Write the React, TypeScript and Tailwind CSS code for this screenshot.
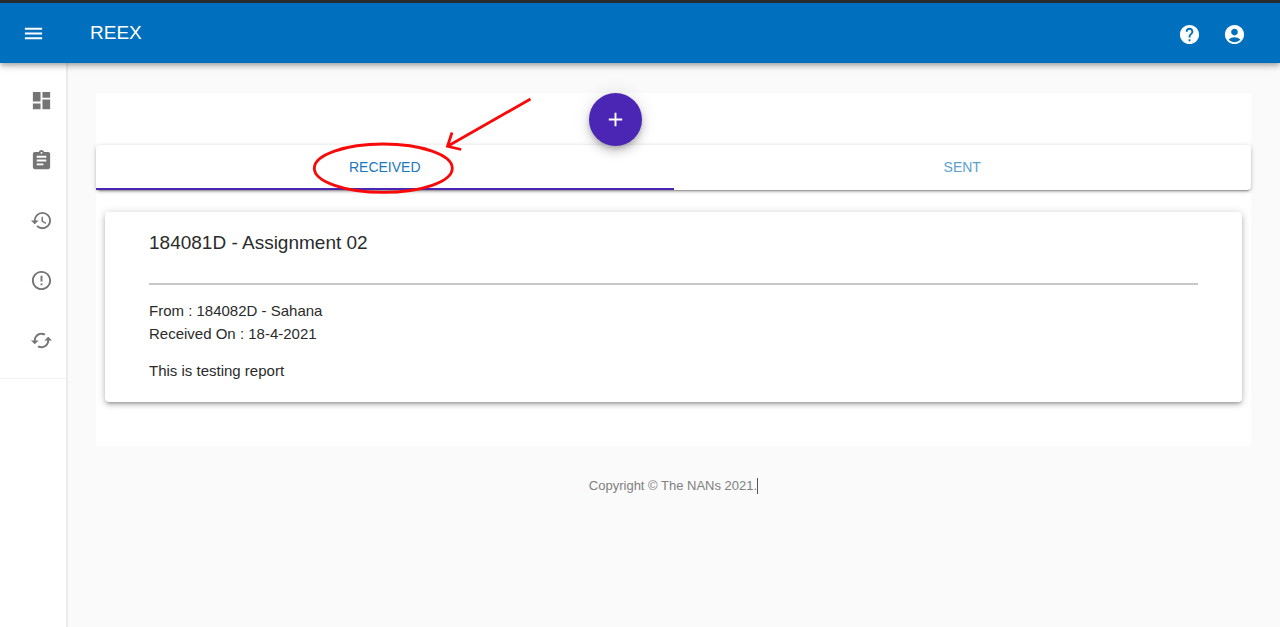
import type { ReactNode } from "react";
import {
  MdAccountCircle,
  MdAdd,
  MdAssignment,
  MdCached,
  MdDashboard,
  MdErrorOutline,
  MdHelp,
  MdHistory,
  MdMenu,
} from "react-icons/md";

const navItems: { label: string; icon: ReactNode }[] = [
  { label: "Dashboard", icon: <MdDashboard size={23} /> },
  { label: "Assignments", icon: <MdAssignment size={23} /> },
  { label: "History", icon: <MdHistory size={23} /> },
  { label: "Issues", icon: <MdErrorOutline size={23} /> },
  { label: "Resubmissions", icon: <MdCached size={23} /> },
];

function Header() {
  return (
    <header className="relative z-10 flex h-[63px] items-center border-t-3 border-[#262b2e] bg-[#006fbd] pr-[34px] pl-[22px] text-white shadow-[0_2px_4px_-1px_rgba(0,0,0,0.2),0_4px_5px_0_rgba(0,0,0,0.14),0_1px_10px_0_rgba(0,0,0,0.12)]">
      <button type="button" aria-label="Open menu">
        <MdMenu size={23} />
      </button>
      <h1 className="ml-[45px] flex-1 text-[19px] leading-7">REEX</h1>
      <div className="flex gap-[22px] pt-[3px]">
        <button type="button" aria-label="Help">
          <MdHelp size={23} />
        </button>
        <button type="button" aria-label="Account">
          <MdAccountCircle size={23} />
        </button>
      </div>
    </header>
  );
}

function Sidebar() {
  return (
    <aside className="w-[68px] shrink-0 border-r-2 border-[#ebebeb] bg-white">
      <nav className="border-b border-[#f5f5f5] pt-[7px] pb-2">
        {navItems.map((item) => (
          <a
            key={item.label}
            href="#"
            aria-label={item.label}
            className="flex h-[60px] items-center pl-[30px] text-[#757575]"
          >
            {item.icon}
          </a>
        ))}
      </nav>
    </aside>
  );
}

function Callout() {
  return (
    <svg
      aria-hidden="true"
      className="pointer-events-none absolute -top-[55px] left-1/2 -ml-20 h-[110px] w-[240px]"
      viewBox="0 0 240 110"
      fill="none"
      stroke="#f80a0a"
      strokeWidth="2.8"
    >
      <ellipse cx="78.300" cy="78.200" rx="69" ry="24.200" />
      <path d="M225.500 9 L143 56 M147 42.500 L142.500 56.300 L156.200 59.500" />
    </svg>
  );
}

export default function App() {
  return (
    <div className="flex min-h-screen flex-col bg-[#fafafa] font-['Liberation_Sans',Arial,sans-serif] text-[#2b2b2b]">
      <Header />
      <div className="flex flex-1">
        <Sidebar />
        <main className="min-w-0 flex-1 pt-[30px] pr-[29px] pl-7">
          <section className="bg-white pb-11">
            <div className="grid grid-cols-12">
              <div className="col-start-6 pl-3">
                <button
                  type="button"
                  aria-label="Add report"
                  className="-mb-px flex size-[53px] items-center justify-center rounded-full bg-[#4b26b5] text-white shadow-[0_3px_5px_-1px_rgba(0,0,0,0.2),0_6px_10px_0_rgba(0,0,0,0.14),0_1px_18px_0_rgba(0,0,0,0.12)]"
                >
                  <MdAdd size={23} />
                </button>
              </div>
            </div>
            <div
              role="tablist"
              className="grid h-[45px] grid-cols-2 rounded bg-white text-[14px] leading-5 shadow-[0_3px_1px_-2px_rgba(0,0,0,0.2),0_2px_2px_0_rgba(0,0,0,0.14),0_1px_5px_0_rgba(0,0,0,0.2)]"
            >
              <div className="relative flex">
                <button
                  type="button"
                  role="tab"
                  aria-selected="true"
                  className="flex-1 border-b-2 border-[#4b26b5] pt-px text-[#1a78c0]"
                >
                  RECEIVED
                </button>
                <Callout />
              </div>
              <button
                type="button"
                role="tab"
                aria-selected="false"
                className="border-b-2 border-transparent pt-px text-[#5ba0d0]"
              >
                SENT
              </button>
            </div>
            <article className="mx-[9px] mt-[22px] rounded bg-white px-11 pt-[17px] pb-5 shadow-[0_3px_3px_-2px_rgba(0,0,0,0.2),0_3px_4px_0_rgba(0,0,0,0.14),0_1px_8px_0_rgba(0,0,0,0.2)]">
              <h2 className="text-[19px] leading-7">184081D - Assignment 02</h2>
              <hr className="mt-[26px] border-t-2 border-[#c8c8c8]" />
              <p className="mt-[14px] text-[15px] leading-[23px]">
                From : 184082D - Sahana
                <br />
                Received On : 18-4-2021
              </p>
              <p className="mt-[14px] text-[15px] leading-[23px]">This is testing report</p>
            </article>
          </section>
          <footer className="mt-8 flex justify-center text-[13px] leading-4 text-[#808080]">
            <span className="border-r border-[#555555]">Copyright © The NANs 2021.</span>
          </footer>
        </main>
      </div>
    </div>
  );
}
